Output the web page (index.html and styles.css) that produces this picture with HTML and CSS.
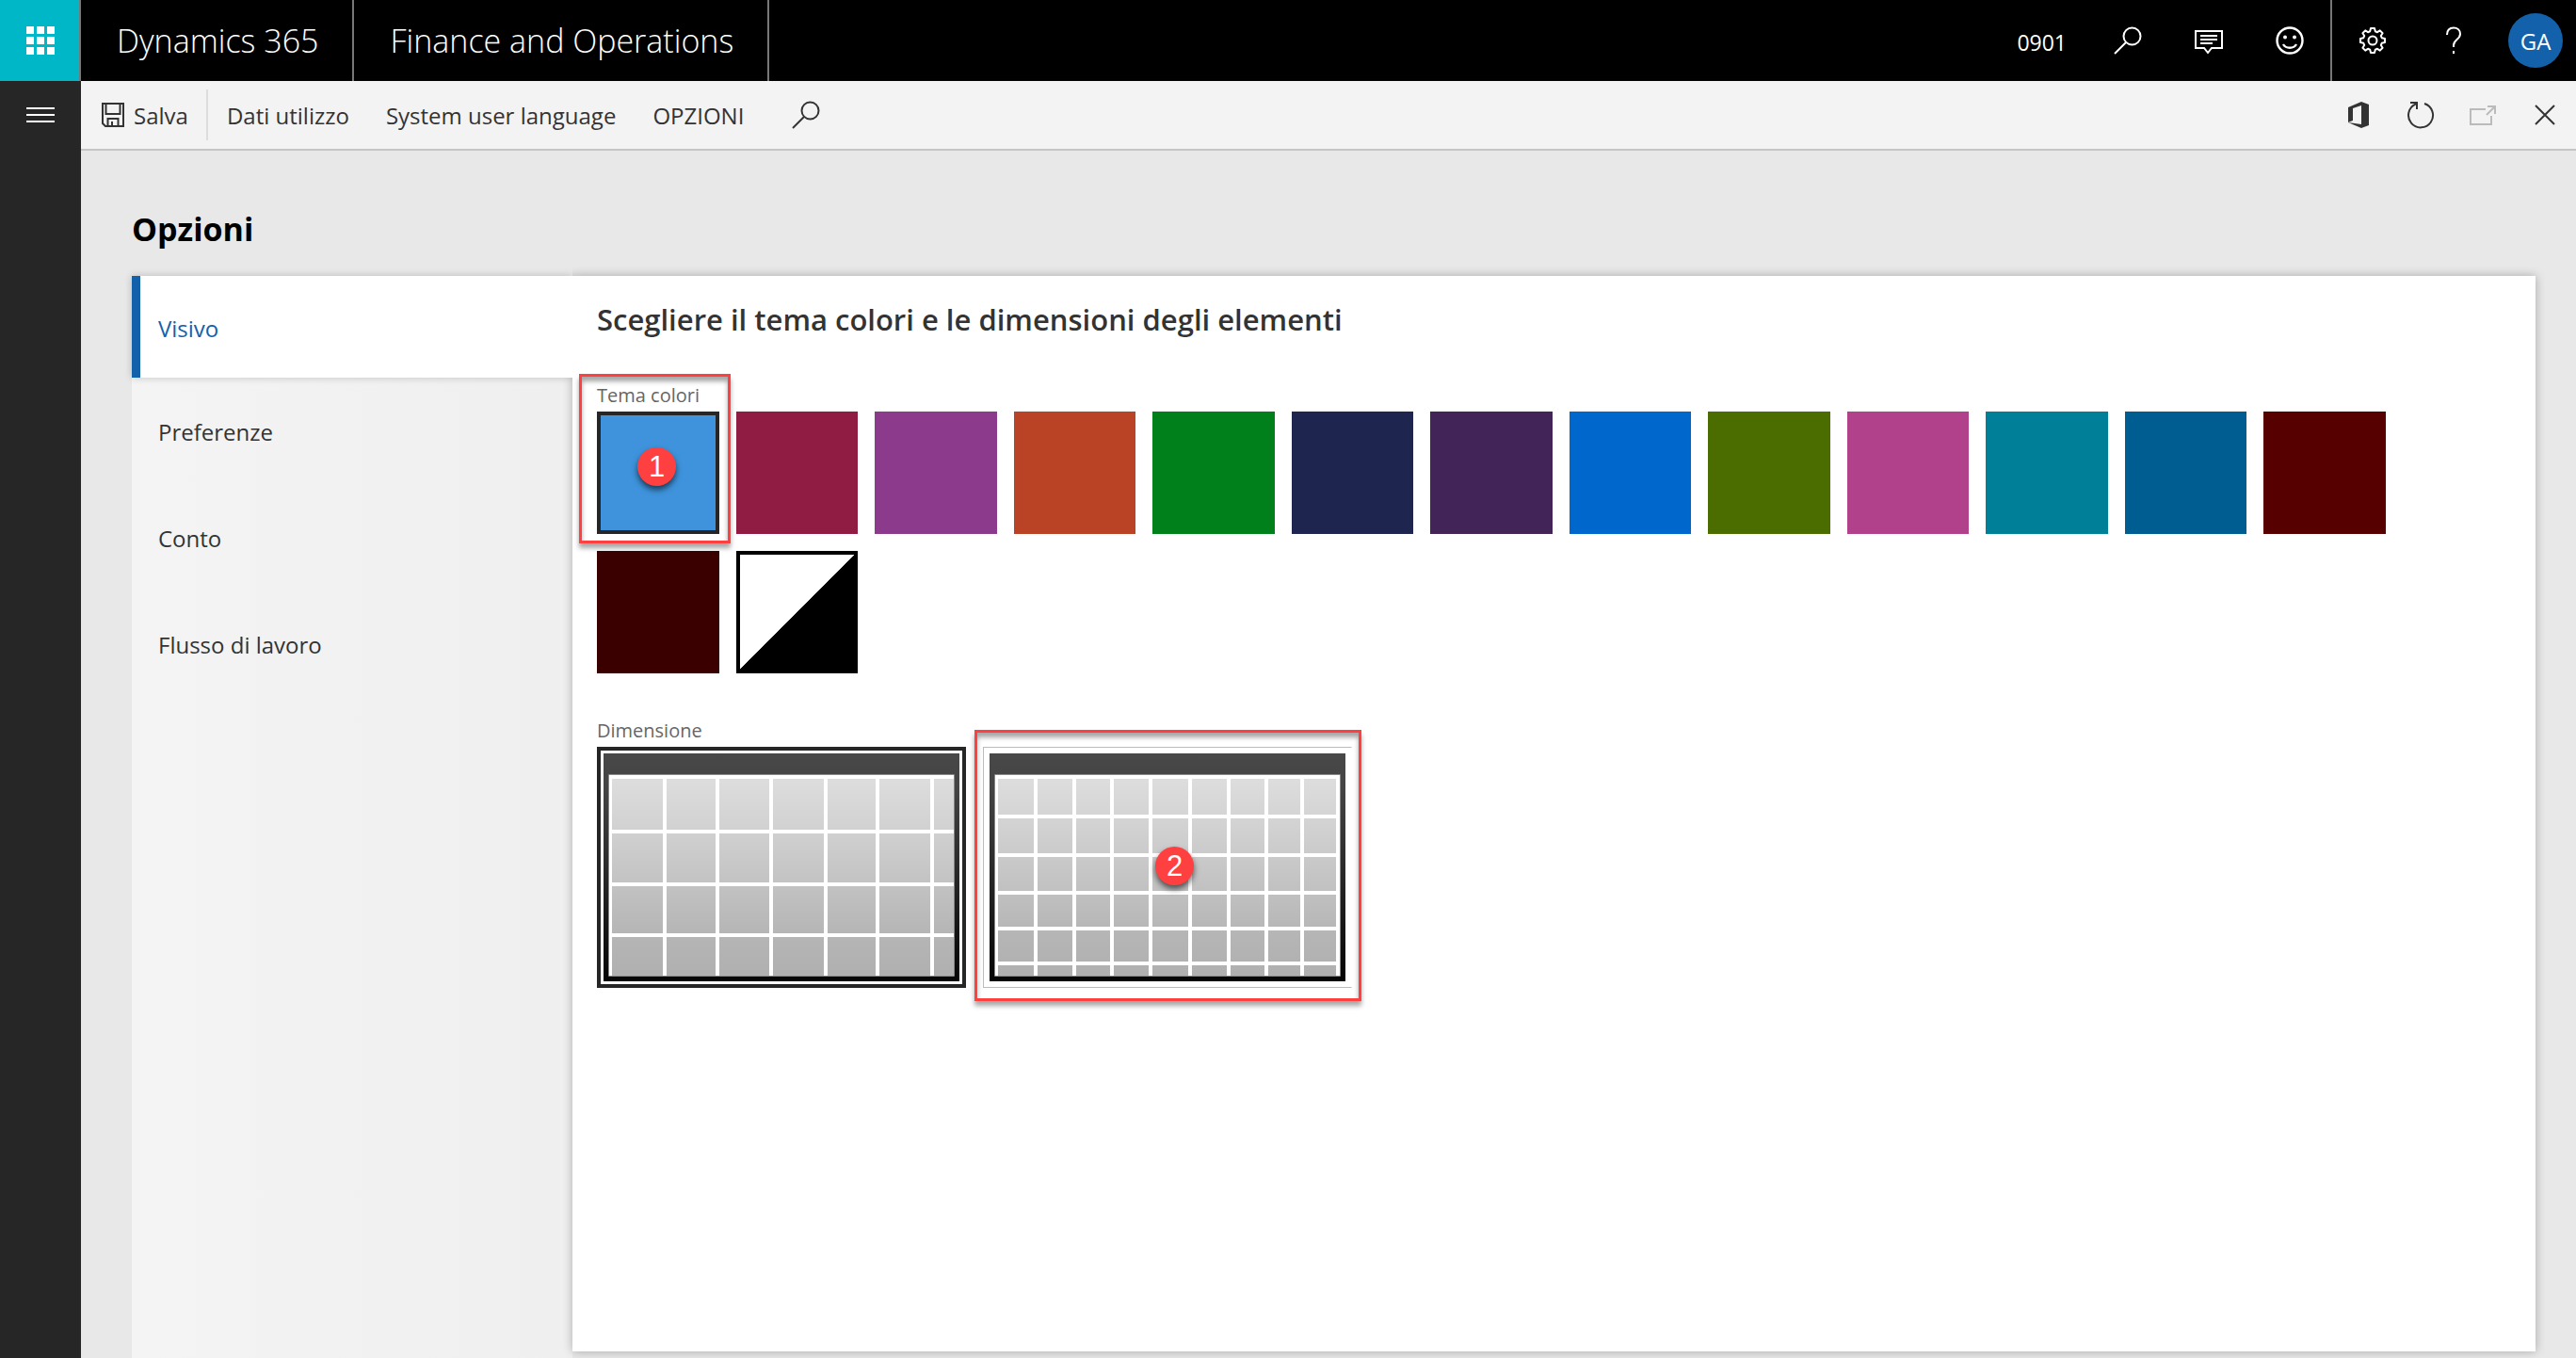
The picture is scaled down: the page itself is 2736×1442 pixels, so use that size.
FILE: index.html
```html
<!DOCTYPE html>
<html lang="it">
<head>
<meta charset="utf-8">
<title>Opzioni - Finance and Operations</title>
<link rel="stylesheet" href="styles.css">
</head>
<body>
<header class="topbar">
  <button class="waffle" aria-label="App">
    <svg width="30" height="30" viewBox="0 0 30 30" fill="#fff"><path d="M0 0h8v8H0zM11 0h8v8h-8zM22 0h8v8h-8zM0 11h8v8H0zM11 11h8v8h-8zM22 11h8v8h-8zM0 22h8v8H0zM11 22h8v8h-8zM22 22h8v8h-8z"/></svg>
  </button>
  <a class="brand" href="#">Dynamics 365</a>
  <a class="brand" href="#">Finance and Operations</a>
  <div class="tools">
    <button class="company">0901</button>
    <button class="tool" aria-label="Cerca">
      <svg width="30" height="30" viewBox="0 0 30 30" fill="none" stroke="#fff" stroke-width="2"><circle cx="19.500" cy="10.500" r="9"/><path d="M13 17L1 29"/></svg>
    </button>
    <button class="tool" aria-label="Messaggi">
      <svg width="30" height="30" viewBox="0 0 30 30" fill="none" stroke="#fff" stroke-width="2"><path d="M1 5h28v18H18l-4 5-4-5H1z"/><path d="M6 10h18M6 14h18M6 18h13"/></svg>
    </button>
    <button class="tool" aria-label="Commenti">
      <svg width="30" height="30" viewBox="0 0 30 30" fill="none" stroke="#fff" stroke-width="2.400"><circle cx="15" cy="15" r="13.500"/><path d="M8 19c3 5 11 5 14 0"/><circle cx="10" cy="11.500" r="2" fill="#fff" stroke="none"/><circle cx="20" cy="11.500" r="2" fill="#fff" stroke="none"/></svg>
    </button>
    <button class="tool tool-split" aria-label="Impostazioni">
      <svg width="30" height="30" viewBox="0 0 30 30" fill="none" stroke="#fff" stroke-width="2" stroke-linejoin="round"><path d="M13 2L17 2L17.800 5.300L20 6.200L22.800 4.400L25.600 7.200L23.800 10L24.700 12.200L28 13L28 17L24.700 17.800L23.800 20L25.600 22.800L22.800 25.600L20 23.800L17.800 24.700L17 28L13 28L12.200 24.700L10 23.800L7.200 25.600L4.400 22.800L6.200 20L5.300 17.800L2 17L2 13L5.300 12.200L6.200 10L4.400 7.200L7.200 4.400L10 6.200L12.200 5.300Z"/><circle cx="15" cy="15" r="4.500"/></svg>
    </button>
    <button class="tool" aria-label="Guida">
      <svg width="30" height="30" viewBox="0 0 30 30" fill="none" stroke="#fff" stroke-width="2"><path d="M8 9c0-5 3-7.500 7-7.500s7 2.500 7 6.500c0 6-7 6-7 12v2"/><path d="M15 26v3"/></svg>
    </button>
    <button class="avatar" aria-label="Account GA">GA</button>
  </div>
</header>
<div class="shell">
  <nav class="rail" aria-label="Navigazione">
    <button class="menu" aria-label="Menu">
      <svg width="30" height="18" viewBox="0 0 30 18" stroke="#fff" stroke-width="2"><path d="M0 2h30M0 9h30M0 16h30"/></svg>
    </button>
  </nav>
  <div class="workspace">
    <div class="actions">
      <button class="action save">
        <svg width="24" height="26" viewBox="0 0 24 26" fill="none" stroke="#333" stroke-width="2"><path d="M1 1h22v24H4l-3-3z"/><path d="M4.500 1v11h15V1"/><path d="M6.500 25v-8h11v8M11 20v5"/></svg>
        Salva
      </button>
      <button class="action">Dati utilizzo</button>
      <button class="action">System user language</button>
      <button class="action">OPZIONI</button>
      <button class="action find" aria-label="Cerca azione">
        <svg width="30" height="30" viewBox="0 0 30 30" fill="none" stroke="#333" stroke-width="2"><circle cx="19.500" cy="10.500" r="9"/><path d="M13 17L1 29"/></svg>
      </button>
      <div class="page-tools">
        <button class="page-tool" aria-label="Apri in Office">
          <svg width="24" height="28" viewBox="0 0 24 28"><path fill="#333" d="M1 6L15 0l8 3v22l-8 3L1 22l14 2V4L6 7v13l-5 2z"/></svg>
        </button>
        <button class="page-tool" aria-label="Aggiorna">
          <svg width="30" height="30" viewBox="0 0 30 30" fill="none" stroke="#333" stroke-width="2"><path d="M19 3a13 13 0 1 1-9 0.400"/><path d="M4 2h7v7"/></svg>
        </button>
        <button class="page-tool" aria-label="Apri in nuova finestra" disabled>
          <svg width="28" height="22" viewBox="0 0 28 22" fill="none" stroke="#bbb" stroke-width="2"><path d="M17 5H1v16h22v-9"/><path d="M18 11l8-8M19 2h8v8"/></svg>
        </button>
        <button class="page-tool" aria-label="Chiudi">
          <svg width="22" height="22" viewBox="0 0 22 22" stroke="#333" stroke-width="2"><path d="M1 1l20 20M21 1L1 21"/></svg>
        </button>
      </div>
    </div>
    <main class="page">
      <h1 class="title">Opzioni</h1>
      <div class="columns">
        <nav class="tabs" aria-label="Opzioni">
          <a class="tab tab-current" href="#visivo">Visivo</a>
          <a class="tab" href="#preferenze">Preferenze</a>
          <a class="tab" href="#conto">Conto</a>
          <a class="tab" href="#flusso">Flusso di lavoro</a>
        </nav>
        <section class="panel" id="visivo">
          <h2 class="heading">Scegliere il tema colori e le dimensioni degli elementi</h2>
          <fieldset class="group">
            <legend class="label">Tema colori</legend>
            <div class="swatches">
              <input class="swatch c1" type="radio" name="tema" aria-label="Azzurro" checked>
              <input class="swatch c2" type="radio" name="tema" aria-label="Cremisi">
              <input class="swatch c3" type="radio" name="tema" aria-label="Viola">
              <input class="swatch c4" type="radio" name="tema" aria-label="Arancione">
              <input class="swatch c5" type="radio" name="tema" aria-label="Verde">
              <input class="swatch c6" type="radio" name="tema" aria-label="Blu notte">
              <input class="swatch c7" type="radio" name="tema" aria-label="Prugna">
              <input class="swatch c8" type="radio" name="tema" aria-label="Blu">
              <input class="swatch c9" type="radio" name="tema" aria-label="Oliva">
              <input class="swatch c10" type="radio" name="tema" aria-label="Rosa">
              <input class="swatch c11" type="radio" name="tema" aria-label="Petrolio">
              <input class="swatch c12" type="radio" name="tema" aria-label="Blu acciaio">
              <input class="swatch c13" type="radio" name="tema" aria-label="Bordeaux">
              <input class="swatch c14" type="radio" name="tema" aria-label="Marrone">
              <input class="swatch contrast" type="radio" name="tema" aria-label="Contrasto elevato">
            </div>
            <div class="callout callout-theme"><span class="step">1</span></div>
          </fieldset>
          <fieldset class="group">
            <legend class="label">Dimensione</legend>
            <div class="sizes">
              <label class="size">
                <input class="size-input" type="radio" name="dimensione" aria-label="Grande" checked>
                <svg class="preview" width="378" height="242" viewBox="0 0 378 242">
                  <defs>
                    <linearGradient id="frame" x1="0" y1="0" x2="0" y2="1"><stop offset="0" stop-color="#484848"/><stop offset="0.150" stop-color="#444"/><stop offset="1" stop-color="#050505"/></linearGradient>
                    <linearGradient id="cells" x1="0" y1="0" x2="0" y2="1"><stop offset="0" stop-color="#dedede"/><stop offset="0.250" stop-color="#d2d2d2"/><stop offset="0.800" stop-color="#b5b5b5"/><stop offset="1" stop-color="#b0b0b0"/></linearGradient>
                  </defs>
                  <path fill="url(#frame)" d="M0 0h378v242H0z"/>
                  <path fill="url(#cells)" d="M6 23h366v213H6z"/>
                  <path stroke="#fff" stroke-width="4" fill="none" d="M7 23v213M65 23v213M121 23v213M178 23v213M236 23v213M291 23v213M349 23v213M6 25h366M6 83h366M6 139h366M6 193h366"/>
                  <path stroke="#888" fill="none" d="M5.500 22.500h367v214h-367z"/>
                </svg>
              </label>
              <label class="size">
                <input class="size-input" type="radio" name="dimensione" aria-label="Piccola">
                <svg class="preview" width="378" height="242" viewBox="0 0 378 242">
                  <path fill="url(#frame)" d="M0 0h378v242H0z"/>
                  <path fill="url(#cells)" d="M6 23h366v213H6z"/>
                  <path stroke="#fff" stroke-width="4" fill="none" d="M7 23v213M49 23v213M90 23v213M130 23v213M171 23v213M213 23v213M254 23v213M294 23v213M332 23v213M370 23v213M6 25h366M6 67h366M6 108h366M6 148h366M6 186h366M6 223h366"/>
                  <path stroke="#888" fill="none" d="M5.500 22.500h367v214h-367z"/>
                </svg>
                <span class="callout callout-size"><span class="step">2</span></span>
              </label>
            </div>
          </fieldset>
        </section>
      </div>
    </main>
  </div>
</div>
</body>
</html>
```
FILE: styles.css
```css
* {
  box-sizing: border-box;
}

body {
  margin: 0;
  min-height: 100vh;
  display: flex;
  flex-direction: column;
  background: #e8e8e8;
  color: #333;
  font-family: "Open Sans", "Noto Sans", sans-serif;
  font-size: 24px;
}

button {
  border: 0;
  padding: 0;
  background: none;
  color: inherit;
  font: inherit;
  display: flex;
  align-items: center;
  justify-content: center;
}

svg {
  display: block;
  flex: none;
}

a {
  color: inherit;
  text-decoration: none;
}

/* Top bar */
.topbar {
  height: 86px;
  display: flex;
  background: #000;
  color: #fff;
}

.waffle {
  width: 86px;
  padding-left: 2px;
  background: #00b7c7;
  border-right: 2px solid #777;
}

.brand {
  display: flex;
  align-items: center;
  padding: 0 36px 0 38px;
  border-right: 2px solid #777;
  font-size: 34px;
  font-weight: 300;
  white-space: nowrap;
}

.tools {
  margin-left: auto;
  display: flex;
  align-items: center;
}

.company {
  margin-right: 22px;
  padding-top: 4px;
  font-size: 23px;
}

.tool {
  width: 86px;
  height: 86px;
}

.tool-split {
  width: 88px;
  border-left: 2px solid #777;
}

.avatar {
  width: 58px;
  height: 58px;
  margin: 0 14px 0 15px;
  border-radius: 50%;
  background: #1461ab;
}

/* Left rail */
.shell {
  flex: 1;
  display: flex;
}

.rail {
  width: 86px;
  background: #262626;
}

.menu {
  width: 86px;
  height: 72px;
}

.workspace {
  flex: 1;
  min-width: 0;
  display: flex;
  flex-direction: column;
}

/* Action bar */
.actions {
  height: 74px;
  display: flex;
  align-items: center;
  background: #f3f3f3;
  border-bottom: 2px solid #c5c5c5;
}

.action {
  height: 54px;
  padding: 0 19px 0 20px;
}

.save {
  gap: 10px;
  padding-left: 22px;
  border-right: 2px solid #ddd;
}

.find {
  padding: 0 32px;
}

.page-tools {
  margin-left: auto;
  display: flex;
}

.page-tool {
  width: 66px;
  height: 54px;
}

/* Page */
.page {
  flex: 1;
  display: flex;
  flex-direction: column;
  padding: 59px 43px 0 54px;
}

.title {
  margin: 0 0 26px;
  color: #000;
  font-size: 34px;
  line-height: 48px;
  font-weight: 700;
}

.columns {
  flex: 1;
  display: flex;
}

.tabs {
  width: 468px;
  background: linear-gradient(90deg, #f4f4f4, #efefef);
}

.tab {
  display: flex;
  align-items: center;
  height: 113px;
  padding: 2px 0 0 28px;
}

.tab-current {
  height: 108px;
  padding-left: 19px;
  border-left: 9px solid #1461ab;
  background: #fff;
  color: #1461ab;
  box-shadow: 0 0 8px rgba(0, 0, 0, 0.2);
}

.panel {
  flex: 1;
  min-width: 0;
  margin-bottom: 7px;
  padding: 22px 26px;
  background: #fff;
  box-shadow: 0 0 10px rgba(0, 0, 0, 0.28);
  clip-path: polygon(0 -10px, calc(100% + 10px) -10px, calc(100% + 10px) calc(100% + 10px), -10px calc(100% + 10px), -10px 108px, 0 108px);
}

.heading {
  margin: 0 0 43px;
  font-size: 31px;
  line-height: 48px;
  font-weight: 600;
}

.group {
  position: relative;
  margin: 0 0 47px;
  border: 0;
  padding: 0;
  min-width: 0;
}

.label {
  padding: 0 0 3px;
  color: #666;
  font-size: 20px;
  line-height: 28px;
}

.swatches {
  display: grid;
  grid-template-columns: repeat(auto-fill, minmax(129px, 1fr));
  gap: 18px;
  max-width: 1900px;
}

.swatch {
  appearance: none;
  height: 130px;
  margin: 0;
}

.swatch:checked {
  border: 4px solid #262626;
}

.c1 { background: #3e93dc; }
.c2 { background: #901c44; }
.c3 { background: #8c3a8c; }
.c4 { background: #ba4325; }
.c5 { background: #00801a; }
.c6 { background: #1e2650; }
.c7 { background: #432458; }
.c8 { background: #0068cd; }
.c9 { background: #4b6d00; }
.c10 { background: #b2418b; }
.c11 { background: #008098; }
.c12 { background: #005d91; }
.c13 { background: #570000; }
.c14 { background: #3a0000; }

.contrast {
  border: 4px solid #000;
  background: linear-gradient(135deg, #fff 50%, #000 50%);
}

.sizes {
  display: flex;
  gap: 18px;
}

.size {
  position: relative;
  display: flex;
  padding: 6px;
  border: 1px solid #bbb;
  border-right-color: #fff;
}

.size:has(.size-input:checked) {
  padding: 3px;
  border: 4px solid #262626;
}

.size-input {
  appearance: none;
  position: absolute;
  inset: 0;
  margin: 0;
}

/* Numbered callouts laid over the controls */
.callout {
  position: absolute;
  display: flex;
  align-items: center;
  justify-content: center;
  border: 3px solid #ff4040;
  box-shadow: 0 5px 5px rgba(0, 0, 0, 0.35), inset 0 5px 5px rgba(0, 0, 0, 0.35);
  pointer-events: none;
}

.callout-theme {
  top: -40px;
  left: -19px;
  width: 161px;
  height: 180px;
  padding: 16px 0 0 4px;
}

.callout-size {
  inset: -19px -11px -15px -10px;
  padding-left: 14px;
}

.step {
  width: 41px;
  height: 41px;
  border-radius: 50%;
  background: #ff4040;
  box-shadow: 0 4px 6px rgba(0, 0, 0, 0.6);
  color: #fff;
  font-family: "Liberation Sans", sans-serif;
  font-size: 31px;
  line-height: 41px;
  text-align: center;
}
```
